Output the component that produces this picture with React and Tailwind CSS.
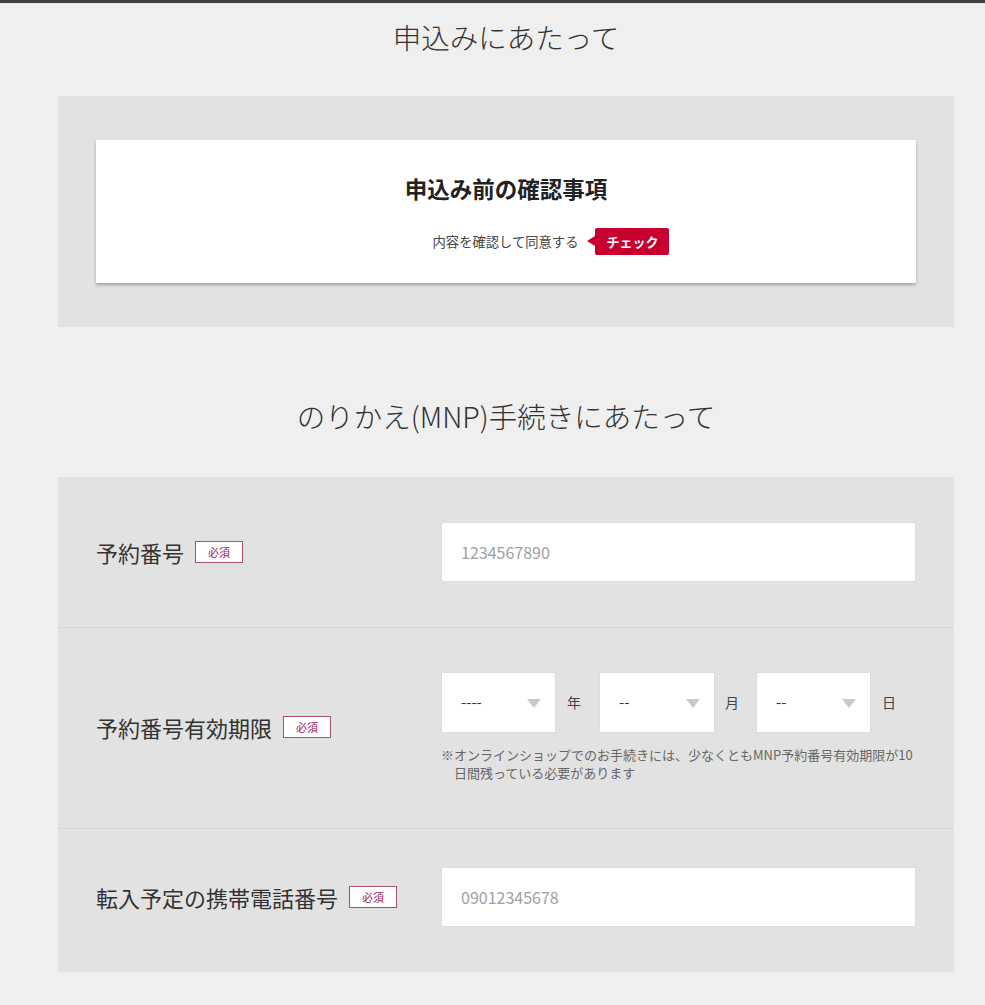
import { useState } from 'react';

const font = { fontFamily: '"Noto Sans CJK JP", "Noto Sans", sans-serif' };

// 必須バッジ
const Required = () => (
  <span className="ml-[11px] inline-flex h-[22px] w-[48px] items-center justify-center border border-[#a8506f] bg-white text-[11px] leading-none text-[#9b2450]">
    必須
  </span>
);

const FieldLabel = ({ children }) => (
  <div className="flex w-[345px] shrink-0 items-center">
    <span className="text-[22px] leading-[30px] text-[#333]">{children}</span>
    <Required />
  </div>
);

const DateSelect = ({ width, placeholder, options, value, onChange }) => (
  <div className={`relative h-[61px] ${width} shrink-0`}>
    <select
      value={value}
      onChange={(e) => onChange(e.target.value)}
      className="h-full w-full appearance-none border border-[#dcdcdc] bg-white pl-[19px] text-[15px] text-[#333] outline-none"
      style={font}
    >
      <option value="">{placeholder}</option>
      {options.map((o) => (
        <option key={o} value={o}>{o}</option>
      ))}
    </select>
    <span className="pointer-events-none absolute right-[15px] top-[27px] h-0 w-0 border-x-[7px] border-t-[9px] border-x-transparent border-t-[#c9c9c9]" />
  </div>
);

export default function App() {
  const [year, setYear] = useState('');
  const [month, setMonth] = useState('');
  const [day, setDay] = useState('');

  return (
    <div className="min-h-[1005px] bg-[#efefef]" style={font}>
      <div className="h-[3px] bg-[#3f3f3f]" />
      <div className="h-px bg-[#e6e6e6]" />

      <div className="ml-[58px] w-[896px]">
        <h1 className="pt-[13px] text-center text-[28.5px] font-light leading-[40px] text-[#333]">
          申込みにあたって
        </h1>

        {/* 申込み前の確認事項 */}
        <section className="mt-[39px] bg-[#e2e2e2] px-[38px] py-[44px]">
          <div className="bg-white pb-[28px] pt-[33px] shadow-[0_2px_3px_rgba(0,0,0,0.28)]">
            <h2 className="text-center text-[22.5px] font-bold leading-[30px] text-[#222]">
              申込み前の確認事項
            </h2>
            <div className="mt-[25px] flex items-center justify-center">
              <span className="ml-[90px] text-[13.3px] text-[#444]">内容を確認して同意する</span>
              <button className="relative ml-[17px] h-[27px] w-[74px] rounded-[2px] bg-[#c8002f] text-[13px] font-bold text-white">
                <span className="absolute -left-[8px] top-[8px] h-0 w-0 border-y-[5px] border-r-[8px] border-y-transparent border-r-[#c8002f]" />
                チェック
              </button>
            </div>
          </div>
        </section>

        <h1 className="mt-[69px] text-center text-[28.5px] font-light leading-[40px] text-[#333]">
          のりかえ(MNP)手続きにあたって
        </h1>

        {/* MNP 情報 */}
        <section className="mt-[41px] bg-[#e2e2e2]">
          <div className="flex items-center border-b border-[#d6d6d6] px-[38px] py-[45px]">
            <FieldLabel>予約番号</FieldLabel>
            <input
              className="h-[60px] flex-1 border border-[#dcdcdc] bg-white px-[19px] text-[16px] text-[#333] outline-none placeholder:text-[#a0a0a0]"
              placeholder="1234567890"
              style={font}
            />
          </div>

          <div className="flex items-center border-b border-[#d6d6d6] px-[38px] pb-[46px] pt-[44px]">
            <FieldLabel>予約番号有効期限</FieldLabel>
            <div className="flex-1">
              <div className="flex items-center text-[14px] text-[#444]">
                <DateSelect width="w-[115px]" placeholder="----" options={['2024', '2025', '2026']} value={year} onChange={setYear} />
                <span className="ml-[11px] mr-[18px]">年</span>
                <DateSelect width="w-[116px]" placeholder="--" options={Array.from({ length: 12 }, (_, i) => String(i + 1))} value={month} onChange={setMonth} />
                <span className="ml-[10px] mr-[17px]">月</span>
                <DateSelect width="w-[115px]" placeholder="--" options={Array.from({ length: 31 }, (_, i) => String(i + 1))} value={day} onChange={setDay} />
                <span className="ml-[11px]">日</span>
              </div>
              <p className="mt-[13px] pl-[1em] -indent-[1em] text-[13px] leading-[18px] text-[#666]">
                ※オンラインショップでのお手続きには、少なくともMNP予約番号有効期限が10
                <br />
                日間残っている必要があります
              </p>
            </div>
          </div>

          <div className="flex items-center px-[38px] pb-[45px] pt-[38px]">
            <FieldLabel>転入予定の携帯電話番号</FieldLabel>
            <input
              className="h-[60px] flex-1 border border-[#dcdcdc] bg-white px-[19px] text-[16px] text-[#333] outline-none placeholder:text-[#a0a0a0]"
              placeholder="09012345678"
              style={font}
            />
          </div>
        </section>
      </div>
    </div>
  );
}
